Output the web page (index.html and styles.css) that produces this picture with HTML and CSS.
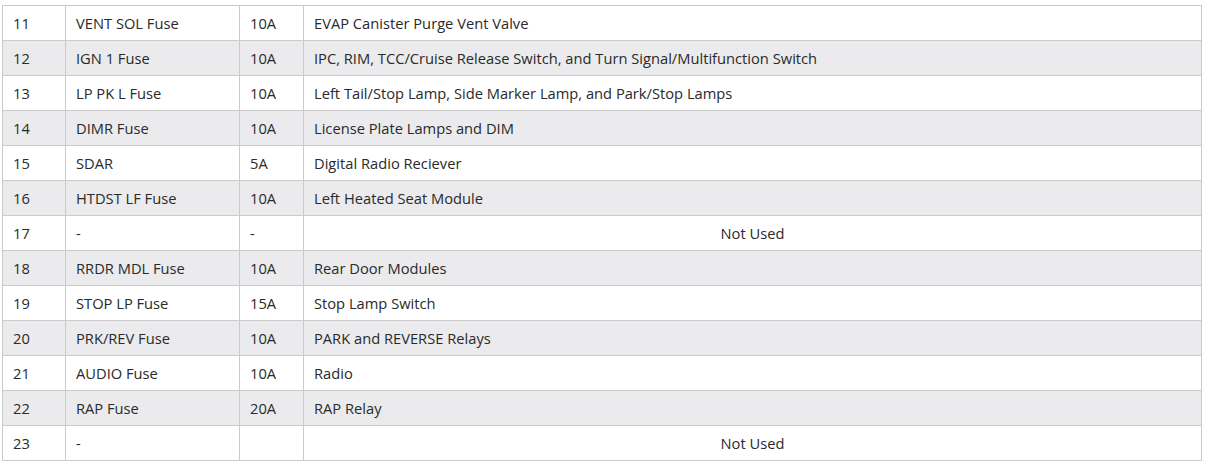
FILE: index.html
```html
<!DOCTYPE html>
<html>
<head>
<meta charset="utf-8">
<link rel="stylesheet" href="styles.css">
</head>
<body>
<table class="fuse-table">
  <colgroup>
    <col class="c-num"><col class="c-name"><col class="c-amp"><col class="c-desc">
  </colgroup>
  <tbody>
    <tr><td>11</td><td>VENT SOL Fuse</td><td>10A</td><td>EVAP Canister Purge Vent Valve</td></tr>
    <tr><td>12</td><td>IGN 1 Fuse</td><td>10A</td><td>IPC, RIM, TCC/Cruise Release Switch, and Turn Signal/Multifunction Switch</td></tr>
    <tr><td>13</td><td>LP PK L Fuse</td><td>10A</td><td>Left Tail/Stop Lamp, Side Marker Lamp, and Park/Stop Lamps</td></tr>
    <tr><td>14</td><td>DIMR Fuse</td><td>10A</td><td>License Plate Lamps and DIM</td></tr>
    <tr><td>15</td><td>SDAR</td><td>5A</td><td>Digital Radio Reciever</td></tr>
    <tr><td>16</td><td>HTDST LF Fuse</td><td>10A</td><td>Left Heated Seat Module</td></tr>
    <tr><td>17</td><td>-</td><td>-</td><td class="center">Not Used</td></tr>
    <tr><td>18</td><td>RRDR MDL Fuse</td><td>10A</td><td>Rear Door Modules</td></tr>
    <tr><td>19</td><td>STOP LP Fuse</td><td>15A</td><td>Stop Lamp Switch</td></tr>
    <tr><td>20</td><td>PRK/REV Fuse</td><td>10A</td><td>PARK and REVERSE Relays</td></tr>
    <tr><td>21</td><td>AUDIO Fuse</td><td>10A</td><td>Radio</td></tr>
    <tr><td>22</td><td>RAP Fuse</td><td>20A</td><td>RAP Relay</td></tr>
    <tr><td>23</td><td>-</td><td></td><td class="center">Not Used</td></tr>
  </tbody>
</table>
</body>
</html>
```

FILE: styles.css
```css
html, body {
  margin: 0;
  padding: 0;
  background: #ffffff;
}
body {
  padding: 5px 0 0 2px;
  font-family: "Open Sans", "Liberation Sans", Arial, sans-serif;
  font-size: 14.7px;
  color: #2a2a2a;
}
.fuse-table {
  border-collapse: collapse;
  width: 1200px;
  table-layout: fixed;
}
.c-num { width: 63px; }
.c-name { width: 174px; }
.c-amp { width: 64px; }
.fuse-table td {
  border: 1px solid #cacaca;
  height: 35px;
  padding: 0 10px;
  box-sizing: border-box;
  vertical-align: middle;
  white-space: nowrap;
}
.fuse-table tr:nth-child(even) td {
  background: #ebebed;
}
.fuse-table td.center {
  text-align: center;
}
```
